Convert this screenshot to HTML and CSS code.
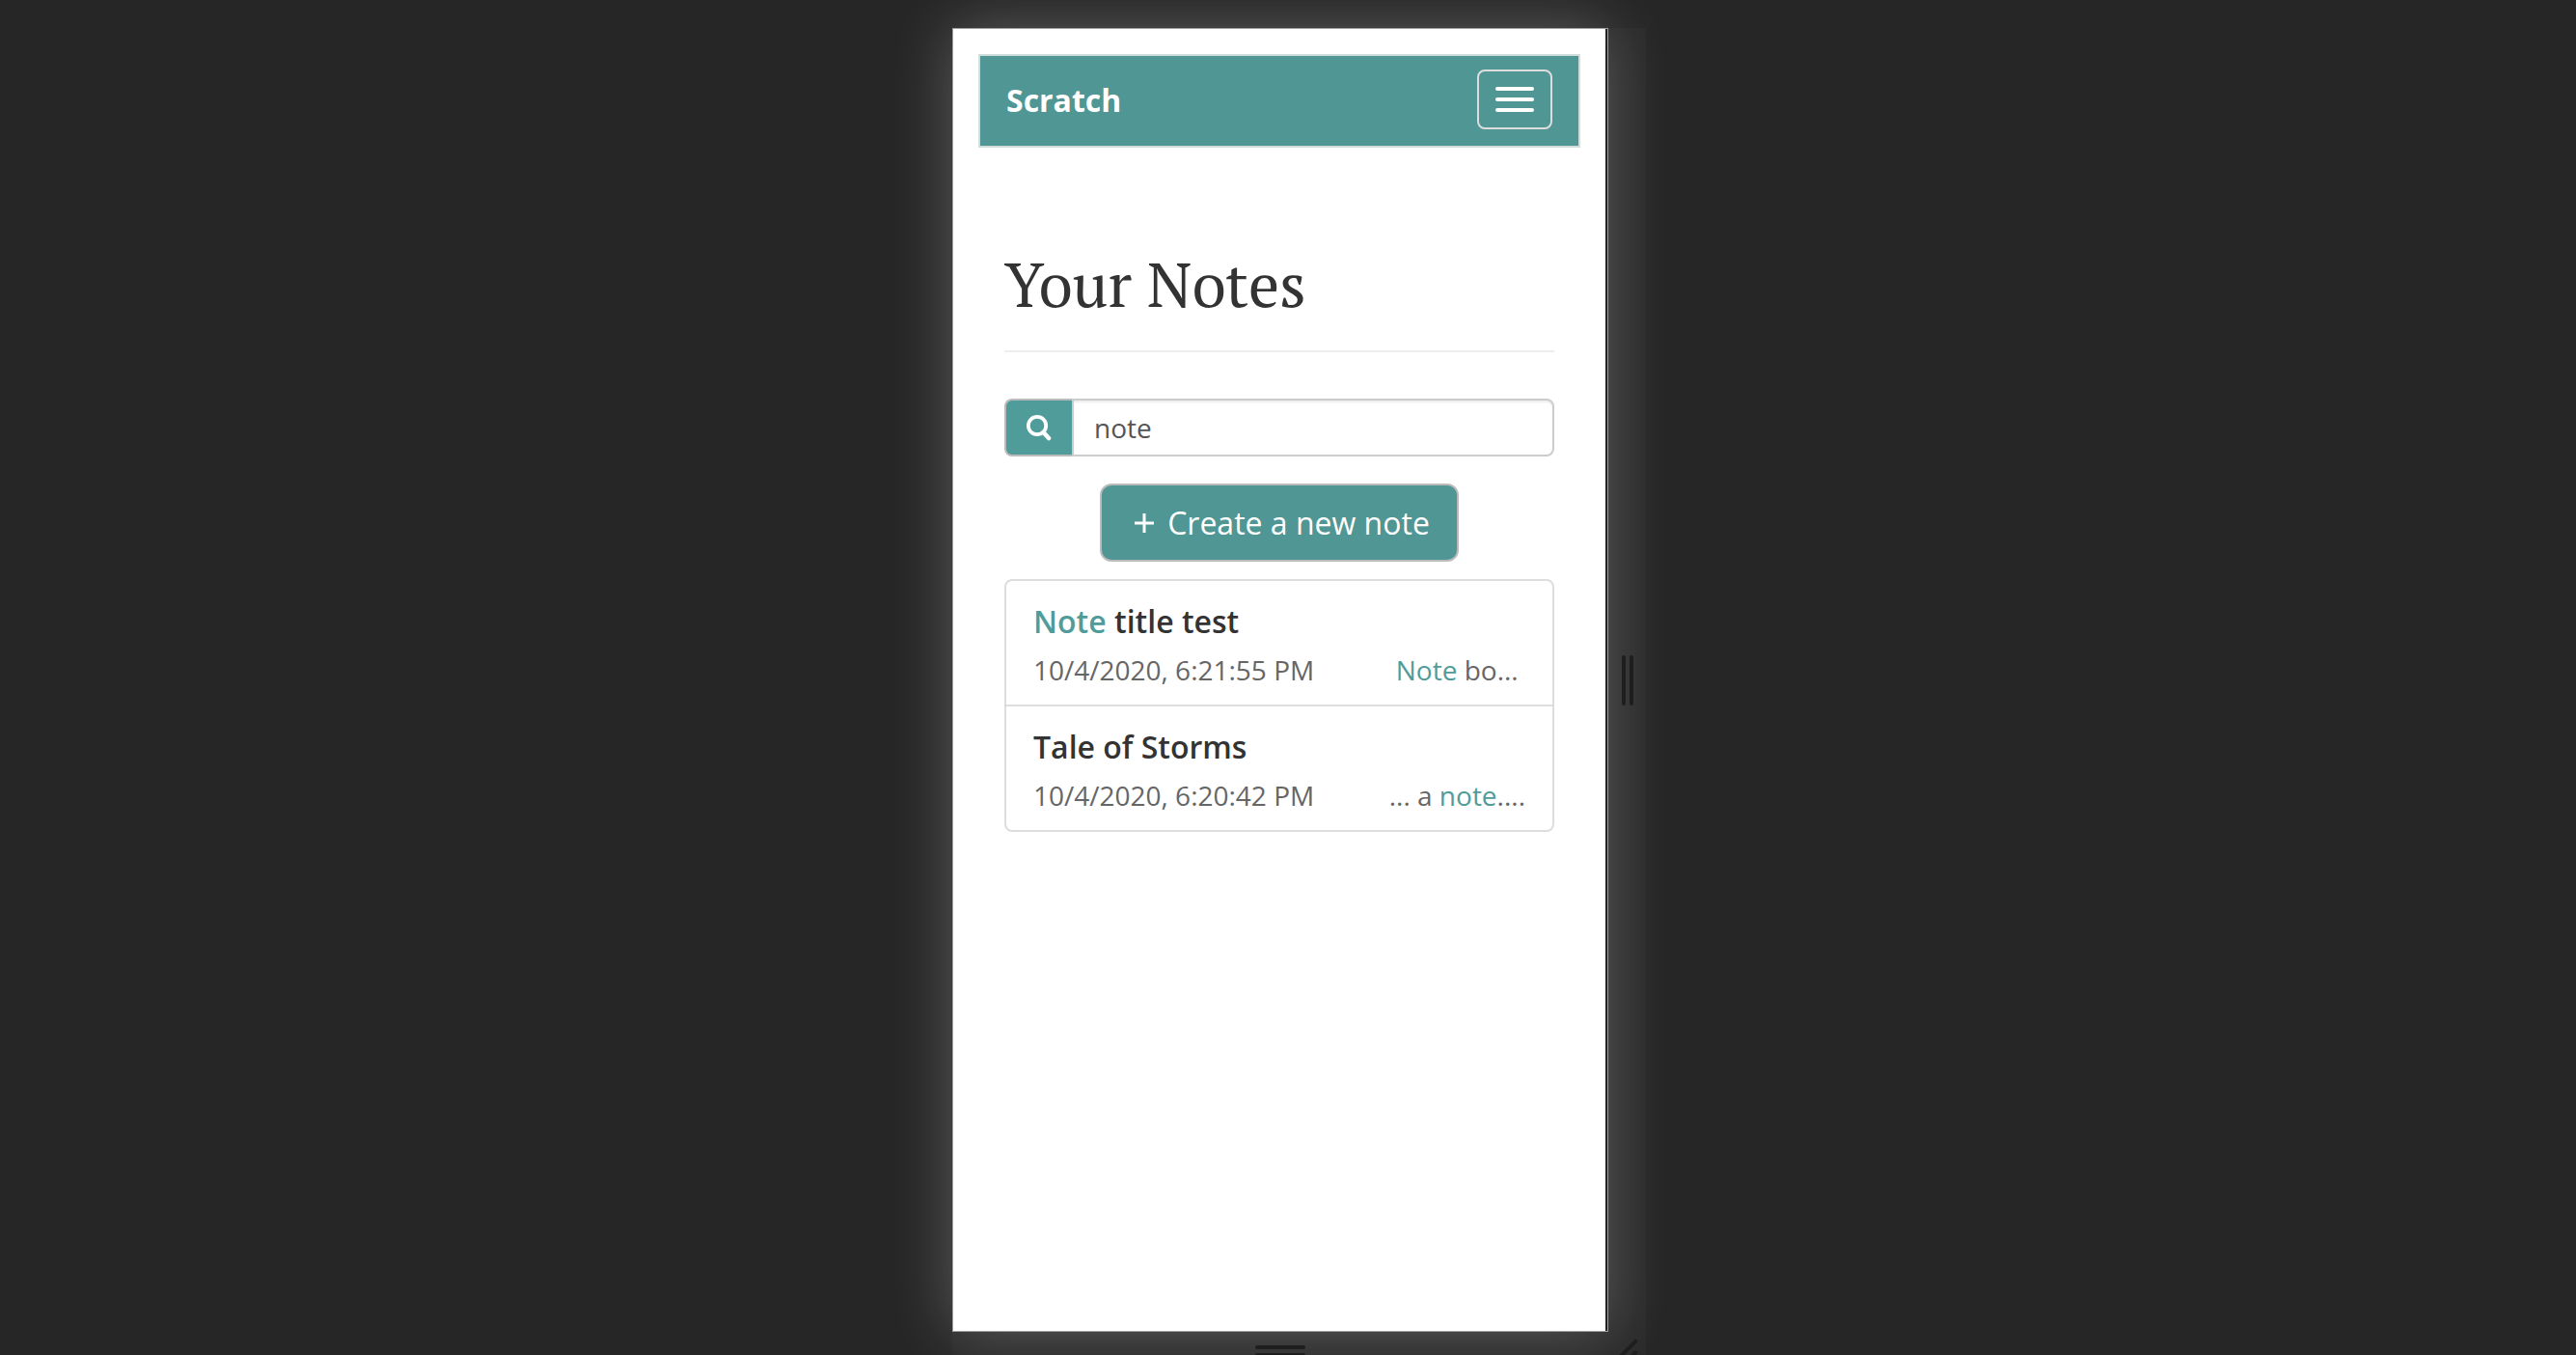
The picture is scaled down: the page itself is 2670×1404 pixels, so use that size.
FILE: index.html
```html
<!DOCTYPE html>
<html lang="en">
<head>
<meta charset="utf-8">
<meta name="viewport" content="width=device-width, initial-scale=1">
<title>Scratch</title>
<link rel="stylesheet" href="styles.css">
</head>
<body>
<div class="stage">
  <div class="device">
    <div class="screen">
      <header class="navbar">
        <a class="brand" href="#">Scratch</a>
        <button class="toggle" type="button" aria-label="Toggle navigation">
          <span class="bar"></span><span class="bar"></span><span class="bar"></span>
        </button>
      </header>
      <main class="notes">
        <h1 class="title">Your Notes</h1>
        <form class="search">
          <label class="addon" for="search" aria-label="Search">
            <svg class="icon-search" viewBox="0 0 26 30" aria-hidden="true"><circle cx="11" cy="13" r="9.2" fill="none" stroke="currentColor" stroke-width="3.8"/><path d="M17.5 20l5.5 6" stroke="currentColor" stroke-width="4.6" stroke-linecap="round"/></svg>
          </label>
          <input class="field" id="search" type="text" value="note">
        </form>
        <button class="create" type="button">
          <svg class="icon-plus" viewBox="0 0 20 20" aria-hidden="true"><path d="M10 0v20M0 10h20" stroke="currentColor" stroke-width="3"/></svg>
          Create a new note
        </button>
        <div class="list">
          <a class="item" href="#">
            <h2 class="item-title"><span class="hit">Note</span> title test</h2>
            <p class="meta"><span>10/4/2020, 6:21:55 PM</span><span><span class="hit">Note</span> bo...&nbsp;</span></p>
          </a>
          <a class="item" href="#">
            <h2 class="item-title">Tale of Storms</h2>
            <p class="meta"><span>10/4/2020, 6:20:42 PM</span><span>... a <span class="hit">note</span>....</span></p>
          </a>
        </div>
      </main>
    </div>
  </div>
  <div class="grip grip-right"><span class="line"></span><span class="line"></span></div>
  <div class="grip grip-bottom"><span class="line"></span><span class="line"></span></div>
  <div class="grip grip-corner">
    <svg class="icon-corner" viewBox="0 0 40 40" aria-hidden="true"><path d="M9 29L29 9M21 29l8-8" stroke="currentColor" stroke-width="4" stroke-linecap="round"/></svg>
  </div>
</div>
</body>
</html>
```
FILE: styles.css
```css
* {
  box-sizing: border-box;
}

body {
  height: 100vh;
  margin: 0;
  overflow: hidden;
  background: #262626;
  color: #333;
  font-family: "Open Sans", "Noto Sans", sans-serif;
  font-size: 28px;
  line-height: 40px;
}

.stage {
  display: grid;
  grid-template-columns: minmax(0, 680px) 39px;
  grid-template-rows: 1fr 40px;
  justify-content: center;
  height: calc(100vh + 16px);
  padding: 29px 0 0 23px;
}

.device {
  border: 1px solid #a0a0a0;
  padding-right: 2px;
  background: #222;
  box-shadow: 0 0 60px rgba(255, 255, 255, 0.25);
}

.screen {
  height: 100%;
  padding: 26px;
  background: #fff;
}

.navbar {
  display: flex;
  align-items: center;
  justify-content: space-between;
  padding: 14px 27px 17px;
  border: 2px solid #cfdddd;
  background: #4f9694;
}

.brand {
  padding-top: 2px;
  color: #fff;
  font-size: 32px;
  font-weight: 700;
  text-decoration: none;
}

.toggle {
  display: flex;
  flex-direction: column;
  gap: 7px;
  padding: 16px 17px;
  border: 2px solid #ddd;
  border-radius: 8px;
  background: transparent;
}

.bar {
  width: 40px;
  height: 4px;
  border-radius: 2px;
  background: #fff;
}

.notes {
  padding: 0 27px;
}

.title {
  margin: 101px 0 48px;
  padding-bottom: 29px;
  border-bottom: 2px solid #eee;
  font-family: "PT Serif", "Liberation Serif", serif;
  font-size: 64px;
  font-weight: 400;
  line-height: 80px;
}

.search {
  display: flex;
  height: 60px;
  margin-bottom: 28px;
}

.addon {
  display: flex;
  align-items: center;
  justify-content: center;
  width: 70px;
  border: 2px solid #bbb;
  border-right: 0;
  border-radius: 8px 0 0 8px;
  background: #509c9a;
  color: #fff;
}

.icon-search {
  width: 26px;
  height: 30px;
}

.field {
  flex: 1;
  min-width: 0;
  padding: 0 21px;
  border: 2px solid #ccc;
  border-radius: 0 8px 8px 0;
  background: #fff;
  box-shadow: inset 0 2px 2px rgba(0, 0, 0, 0.08);
  color: #555;
  font: inherit;
}

.create {
  display: flex;
  align-items: center;
  gap: 14px;
  margin: 0 auto 18px;
  padding: 19px 28px 18px 34px;
  border: 2px solid #bbb;
  border-radius: 12px;
  background: #4f9694;
  color: #fff;
  font-family: inherit;
  font-size: 32px;
  line-height: 40px;
}

.icon-plus {
  width: 20px;
  height: 20px;
}

.list {
  border: 2px solid #ddd;
  border-radius: 8px;
}

.item {
  display: block;
  padding: 20px 28px 16px;
  color: #333;
  text-decoration: none;
}

.item + .item {
  border-top: 2px solid #ddd;
}

.item-title {
  margin: 0 0 8px;
  font-size: 32px;
  font-weight: 600;
  line-height: 44px;
}

.meta {
  display: flex;
  justify-content: space-between;
  margin: 0;
  color: #666;
}

.hit {
  color: #509c9a;
}

.grip {
  display: flex;
  align-items: center;
  justify-content: center;
  gap: 4px;
  background: rgba(255, 255, 255, 0.02);
  color: #1e1e1e;
}

.grip-bottom {
  flex-direction: column;
}

.line {
  border-radius: 2px;
  background: #1e1e1e;
}

.grip-right .line {
  width: 4px;
  height: 52px;
}

.grip-bottom .line {
  width: 52px;
  height: 4px;
}

.icon-corner {
  width: 39px;
  height: 39px;
}
```
